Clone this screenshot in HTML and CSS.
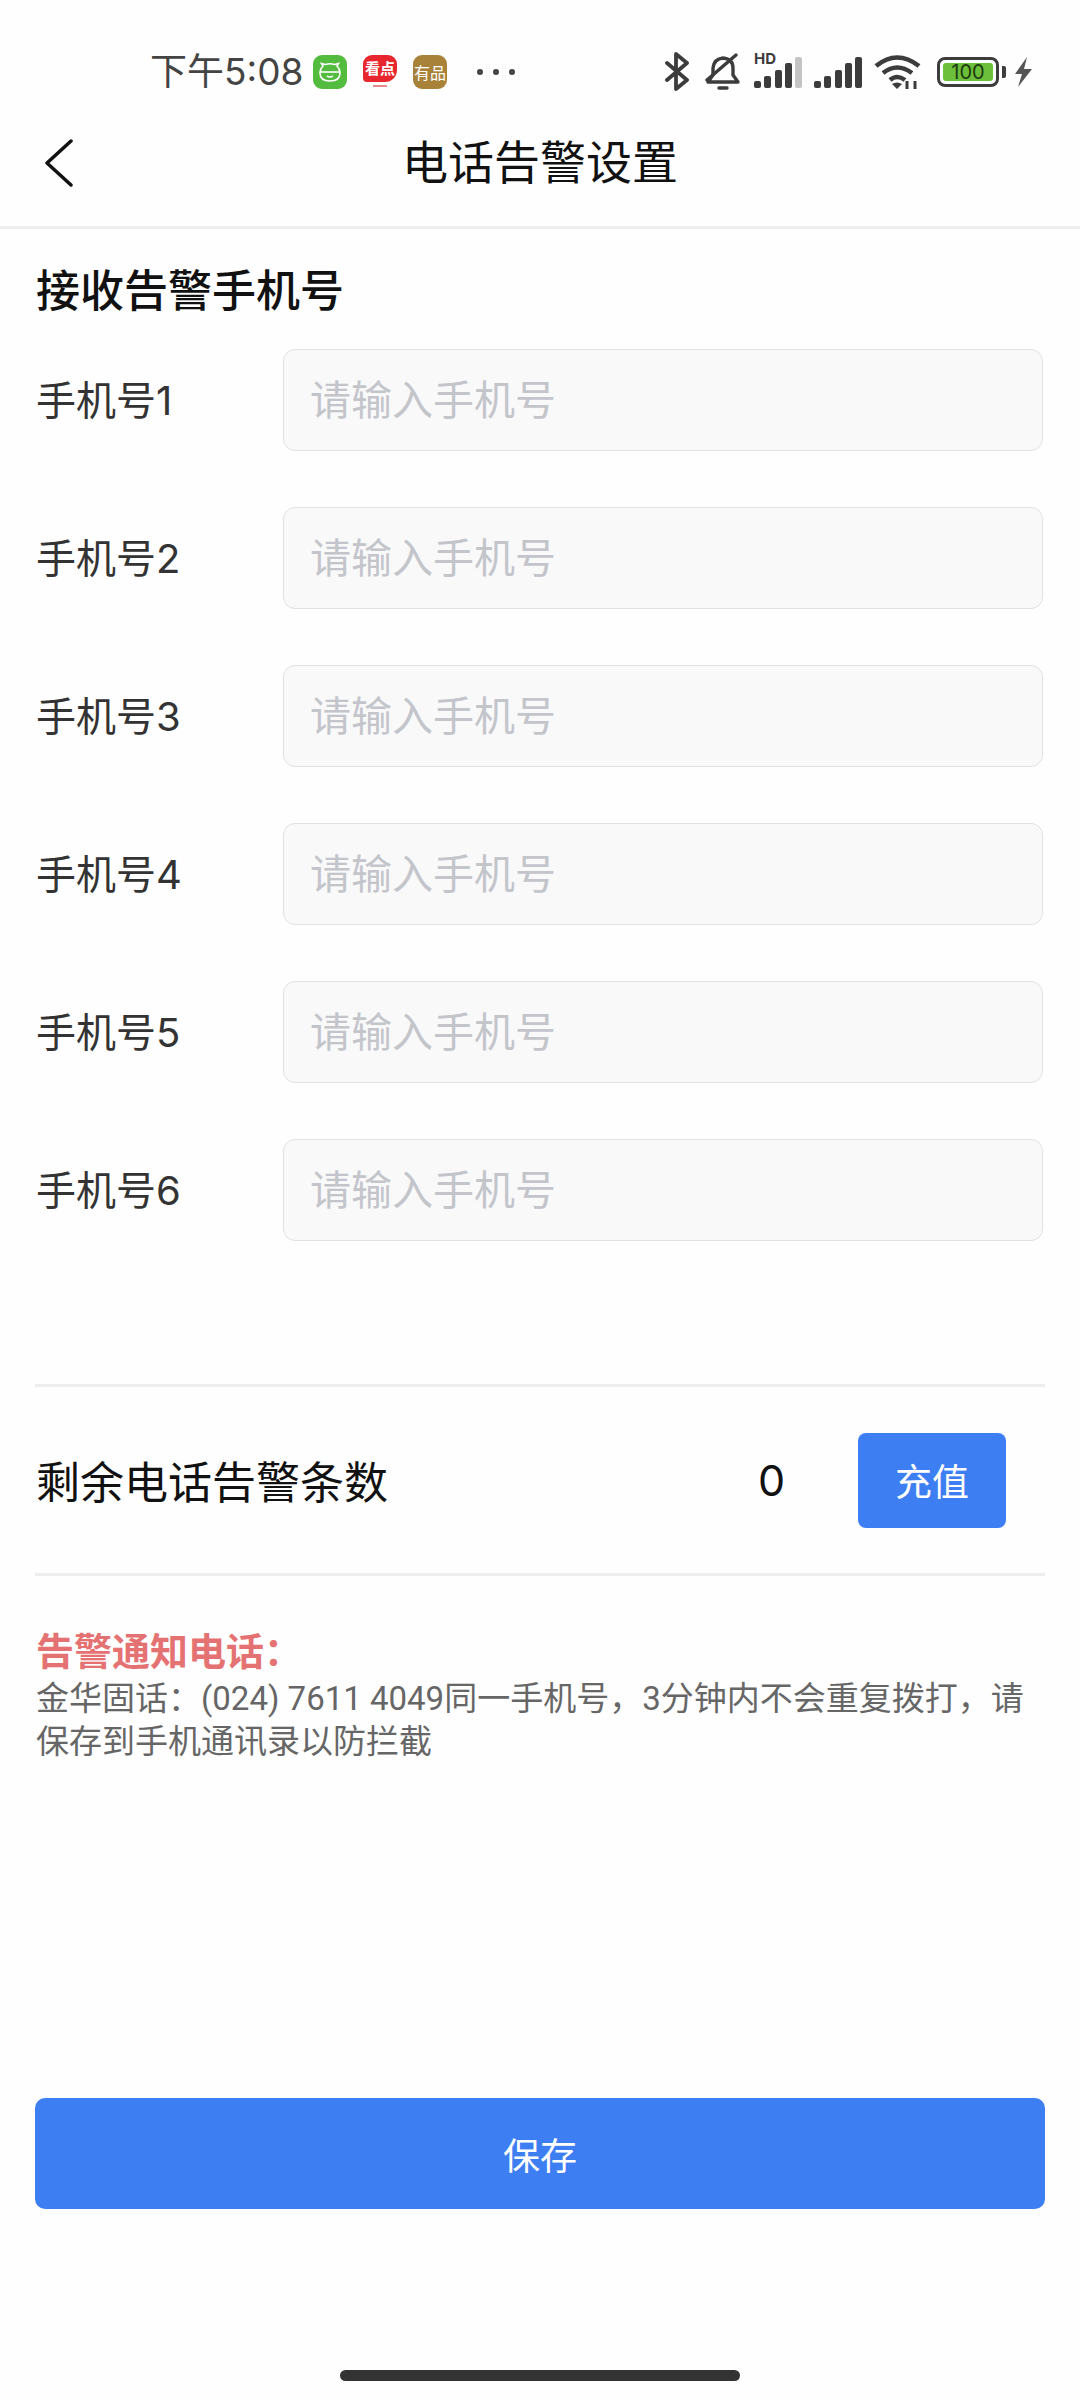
FILE: index.html
```html
<!DOCTYPE html>
<html lang="zh-CN">
<head>
    <meta charset="UTF-8">
    <title>电话告警设置</title>
    <link rel="stylesheet" href="styles.css">
</head>
<body>
    <!-- Status bar -->
    <div class="status-bar">
        <span class="status-time">下午5:08</span>
        <span class="app-icon app-green">
            <svg width="34" height="34" viewBox="0 0 34 34" fill="none" stroke="#fff" stroke-width="1.6">
                <path d="M10 11 L8.500 8.500 L12.500 9.500 Q17 8 21.500 9.500 L25.500 8.500 L24 11 Q27 14 27 18 Q27 26 17 26 Q7 26 7 18 Q7 14 10 11 Z"/>
                <path d="M7.500 17 H26.500"/>
                <path d="M14 21 Q17 23 20 21"/>
            </svg>
        </span>
        <span class="app-icon app-red"><span class="app-red-flag">看点</span></span>
        <span class="app-icon app-brown">有品</span>
        <span class="status-dots"><i></i><i></i><i></i></span>

        <span class="status-right">
            <svg class="ic-bt" width="24" height="39" viewBox="0 0 24 39" fill="none" stroke="#3c3c3c" stroke-width="3.800" stroke-linecap="round" stroke-linejoin="round">
                <path d="M2 11 L22 28 L11 37 V2 L22 11 L2 28"/>
            </svg>
            <svg class="ic-bell" width="36" height="37" viewBox="0 0 36 37" fill="none" stroke="#3c3c3c" stroke-width="3.400" stroke-linecap="round" stroke-linejoin="round">
                <path d="M3 29 H33 L28 22 V15 Q28 6 18 5 Q9 6 8 15 V22 Z"/>
                <path d="M2 27 L31 2"/>
                <path d="M14 35 H22"/>
            </svg>
            <span class="signal signal-hd">
                <span class="hd-mark">HD</span>
                <i class="b1"></i><i class="b2"></i><i class="b3"></i><i class="b4"></i><i class="b5"></i>
            </span>
            <span class="signal">
                <i class="b1"></i><i class="b2"></i><i class="b3"></i><i class="b4"></i><i class="b5 on"></i>
            </span>
            <svg class="ic-wifi" width="48" height="36" viewBox="0 0 48 36" fill="none" stroke="#3c3c3c" stroke-width="4.600">
                <path d="M2 12 Q23 -5 45 12"/>
                <path d="M9 19 Q23 8 38 19"/>
                <path d="M16 26 Q23 20 31 26"/>
                <path d="M23 35 L18 30 Q23 27 28 30 Z" fill="#3c3c3c" stroke="none"/>
                <path d="M33 35 V27 M41 35 V27" stroke-width="3"/>
            </svg>
            <span class="battery"><span class="battery-level">100</span></span>
            <span class="battery-nub"></span>
            <svg class="ic-bolt" width="19" height="30" viewBox="0 0 19 30">
                <path d="M13 0 L1 17 H8 L4 30 L18 12 H10 Z" fill="#555"/>
            </svg>
        </span>
    </div>

    <!-- Nav bar -->
    <div class="nav-bar">
        <svg class="nav-back" width="30" height="48" viewBox="0 0 30 48" fill="none" stroke="#111" stroke-width="3.500" stroke-linecap="round" stroke-linejoin="round">
            <path d="M27 2 L3 24 L27 46"/>
        </svg>
        <span class="nav-title">电话告警设置</span>
    </div>

    <div class="content">
        <h2 class="section-title">接收告警手机号</h2>

        <div class="phone-list">
            <label class="phone-row"><span class="phone-label">手机号1</span><input class="phone-input" placeholder="请输入手机号"></label>
            <label class="phone-row"><span class="phone-label">手机号2</span><input class="phone-input" placeholder="请输入手机号"></label>
            <label class="phone-row"><span class="phone-label">手机号3</span><input class="phone-input" placeholder="请输入手机号"></label>
            <label class="phone-row"><span class="phone-label">手机号4</span><input class="phone-input" placeholder="请输入手机号"></label>
            <label class="phone-row"><span class="phone-label">手机号5</span><input class="phone-input" placeholder="请输入手机号"></label>
            <label class="phone-row"><span class="phone-label">手机号6</span><input class="phone-input" placeholder="请输入手机号"></label>
        </div>

        <div class="remain-row">
            <span class="remain-label">剩余电话告警条数</span>
            <span class="remain-count">0</span>
            <button class="recharge-btn">充值</button>
        </div>

        <div class="notice">
            <div class="notice-title">告警通知电话&#xFF1A;</div>
            <p class="notice-text">金华固话&#xFF1A;(024) 7611 4049同一手机号&#xFF0C;3分钟内不会重复拨打&#xFF0C;请保存到手机通讯录以防拦截</p>
        </div>

        <button class="save-btn">保存</button>
    </div>

    <div class="home-bar"></div>
</body>
</html>
```

FILE: styles.css
```css
* {
    box-sizing: border-box;
}
body {
    margin: 0;
    width: 1080px;
    height: 2400px;
    overflow: hidden;
    background-color: #fefefe;
    font-family: Inter, "Noto Sans CJK SC", sans-serif;
    color: #333;
    display: flex;
    flex-direction: column;
}

/* Status bar */
.status-bar {
    height: 53px;
    margin-top: 45px;
    padding-left: 150px;
    display: flex;
    align-items: center;
    flex-shrink: 0;
}
.status-time {
    width: 163px;
    font-size: 37px;
    line-height: 50px;
    color: #444;
    white-space: nowrap;
}
.app-icon {
    width: 34px;
    height: 34px;
    border-radius: 9px;
    margin-right: 16px;
    display: flex;
    align-items: center;
    justify-content: center;
    color: #fff;
    font-size: 14px;
    flex-shrink: 0;
}
.app-green {
    background: #53bb3e;
}
.app-red {
    flex-direction: column;
    justify-content: flex-start;
}
.app-red-flag {
    width: 34px;
    height: 27px;
    background: #e7262d;
    border-radius: 9px 9px 12px 4px;
    text-align: center;
    font-size: 15px;
    font-weight: 700;
    line-height: 27px;
}
.app-red::after {
    content: '';
    width: 14px;
    height: 2px;
    margin-top: 3px;
    background: #e98a8a;
}
.app-brown {
    background: #a88238;
    font-size: 16px;
}
.status-dots {
    margin-left: 14px;
    width: 38px;
    display: flex;
    justify-content: space-between;
}
.status-dots i {
    width: 6px;
    height: 6px;
    border-radius: 50%;
    background: #444;
}
.status-right {
    margin-left: 150px;
    display: flex;
    align-items: center;
}
.ic-bell {
    margin-left: 16px;
}
.signal {
    position: relative;
    width: 48px;
    height: 32px;
    margin-left: 12px;
    display: flex;
    align-items: flex-end;
    justify-content: space-between;
}
.signal-hd {
    margin-left: 13px;
}
.signal i {
    width: 7px;
    background: #3c3c3c;
    border-radius: 2px;
}
.signal .b1 { height: 7px; }
.signal .b2 { height: 12px; }
.signal .b3 { height: 18px; }
.signal .b4 { height: 25px; }
.signal .b5 { height: 31px; background: #c4c4c4; }
.signal .b5.on { background: #3c3c3c; }
.hd-mark {
    position: absolute;
    left: 0;
    top: -4px;
    font-size: 15px;
    font-weight: 700;
    line-height: 14px;
    color: #3c3c3c;
}
.ic-wifi {
    margin-left: 12px;
}
.battery {
    width: 62px;
    height: 30px;
    margin-left: 15px;
    padding: 3px;
    border: 3px solid #3c3c3c;
    border-radius: 8px;
    display: flex;
}
.battery-level {
    flex: 1;
    background: #6cbf3a;
    border-radius: 3px;
    font-size: 20px;
    line-height: 18px;
    text-align: center;
    color: #1c3a10;
}
.battery-nub {
    width: 4px;
    height: 12px;
    margin-left: 3px;
    background: #3c3c3c;
    border-radius: 0 2px 2px 0;
}
.ic-bolt {
    margin-left: 8px;
}

/* Nav bar */
.nav-bar {
    position: relative;
    height: 131px;
    flex-shrink: 0;
    border-bottom: 3px solid #eeeeee;
    display: flex;
    align-items: center;
    justify-content: center;
}
.nav-back {
    position: absolute;
    left: 44px;
    top: 41px;
}
.nav-title {
    font-size: 46px;
    line-height: 60px;
    color: #111;
}

/* Content */
.content {
    padding: 0 35px;
    flex: 1;
    display: flex;
    flex-direction: column;
}
.section-title {
    margin: 32px 0 0 1px;
    font-size: 44px;
    line-height: 60px;
    font-weight: 500;
    color: #111;
}
.phone-list {
    margin-top: 28px;
    display: flex;
    flex-direction: column;
    gap: 56px;
}
.phone-row {
    display: flex;
    align-items: center;
    padding-left: 1px;
}
.phone-label {
    width: 247px;
    padding-bottom: 5px;
    font-size: 40px;
    color: #333;
}
.phone-input {
    width: 760px;
    height: 102px;
    padding: 0 26px;
    border: 1px solid #e0e1e6;
    border-radius: 12px;
    background: #f9f9fa;
    font-family: inherit;
    font-size: 41px;
    outline: none;
}
.phone-input::placeholder {
    color: #c3c5cb;
}

.remain-row {
    margin-top: 143px;
    height: 192px;
    border-top: 3px solid #eeeeee;
    border-bottom: 3px solid #eeeeee;
    display: flex;
    align-items: center;
}
.remain-label {
    width: 723px;
    padding-left: 1px;
    font-size: 44px;
    color: #111;
}
.remain-count {
    width: 100px;
    font-size: 43px;
    color: #111;
}
.recharge-btn {
    width: 148px;
    height: 95px;
    border: none;
    border-radius: 8px;
    background: #3d7ef2;
    color: #fff;
    font-family: inherit;
    font-size: 37px;
}

.notice {
    margin-top: 50px;
    padding-left: 1px;
}
.notice-title {
    font-size: 38px;
    line-height: 51px;
    font-weight: 700;
    color: #e57272;
}
.notice-text {
    margin: 0;
    width: 1000px;
    font-family: Roboto, "Noto Sans CJK SC", sans-serif;
    font-size: 33px;
    line-height: 43px;
    color: #666;
}

.save-btn {
    margin-top: 335px;
    width: 1010px;
    height: 111px;
    border: none;
    border-radius: 10px;
    background: #3d7ef2;
    color: #fff;
    font-family: inherit;
    font-size: 37px;
}

.home-bar {
    position: absolute;
    left: 340px;
    top: 2370px;
    width: 400px;
    height: 11px;
    border-radius: 6px;
    background: #333;
}
```
